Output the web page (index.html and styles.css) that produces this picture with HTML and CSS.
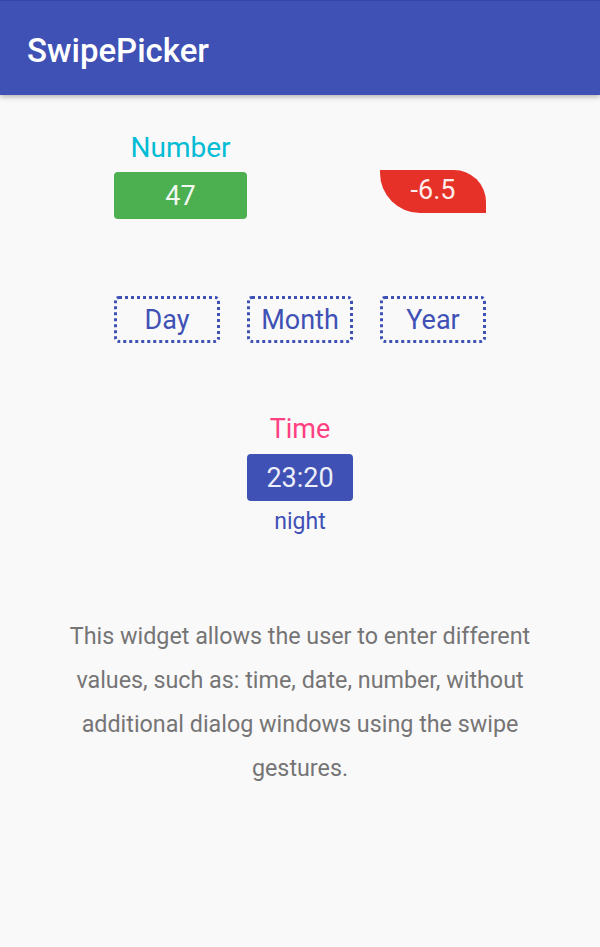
FILE: index.html
```html
<!DOCTYPE html>
<html>
<head>
<meta charset="utf-8">
<link rel="stylesheet" href="styles.css">
</head>
<body>
<header class="appbar"><h1 class="title">SwipePicker</h1></header>
<main class="content">
  <section class="row row-number">
    <div class="cell">
      <div class="label label-number">Number</div>
      <div class="box box-green">47</div>
    </div>
    <div class="cell"></div>
    <div class="cell cell-red">
      <div class="box box-red">-6.5</div>
    </div>
  </section>
  <section class="row row-date">
    <div class="box box-dotted">Day</div>
    <div class="box box-dotted">Month</div>
    <div class="box box-dotted">Year</div>
  </section>
  <section class="time">
    <div class="label label-time">Time</div>
    <div class="box box-blue">23:20</div>
    <div class="night">night</div>
  </section>
  <p class="desc">This widget allows the user to enter different values, such as: time, date, number, without additional dialog windows using the swipe gestures.</p>
</main>
</body>
</html>
```
FILE: styles.css
```css
html, body {
  margin: 0;
  padding: 0;
}
body {
  background: #faf9fa;
  font-family: Roboto, "Noto Sans", sans-serif;
  width: 600px;
  height: 947px;
  overflow: hidden;
}
.appbar {
  height: 95px;
  background: #3f51b5;
  border-top: 1px solid #3447a8;
  box-sizing: border-box;
  box-shadow: 0 2px 5px rgba(0,0,0,0.28);
  display: flex;
  align-items: center;
  padding-left: 27px;
}
.title {
  margin: 0;
  color: #fff;
  font-size: 33px;
  font-weight: 500;
  padding-top: 4px;
}
.content {
  display: flex;
  flex-direction: column;
  align-items: center;
}
.row {
  display: grid;
  grid-template-columns: 106px 106px 106px;
  column-gap: 27px;
}
.row-number {
  margin-top: 37px;
  height: 88px;
}
.cell {
  display: flex;
  flex-direction: column;
  align-items: flex-start;
}
.cell-red {
  padding-top: 38px;
}
.label {
  font-size: 28px;
  line-height: 32px;
  text-align: center;
}
.label-number {
  color: #00bcd4;
  width: 133px;
  margin-bottom: 8px;
}
.box {
  box-sizing: border-box;
  display: flex;
  align-items: center;
  justify-content: center;
  font-size: 27px;
  height: 47px;
  border-radius: 4px;
}
.box-green {
  width: 133px;
  background: #4caf50;
  color: #f1f8f0;
}
.box-red {
  width: 106px;
  height: 43px;
  background: #e53127;
  color: #fdecea;
  border-radius: 0 32px 0 40px;
  padding-bottom: 4px;
}
.row-date {
  margin-top: 76px;
}
.box-dotted {
  border: 3px dotted #3f51b5;
  border-radius: 5px;
  color: #3f51b5;
}
.time {
  margin-top: 70px;
  display: flex;
  flex-direction: column;
  align-items: center;
}
.label-time {
  color: #ff4081;
  font-size: 27px;
  margin-bottom: 9px;
}
.box-blue {
  width: 106px;
  background: #3f51b5;
  color: #eceef8;
}
.night {
  color: #3f51b5;
  font-size: 23px;
  line-height: 30px;
  margin-top: 6px;
}
.desc {
  margin: 77px 0 0;
  width: 500px;
  text-align: center;
  color: #757575;
  font-size: 23.3px;
  line-height: 44px;
}
```
